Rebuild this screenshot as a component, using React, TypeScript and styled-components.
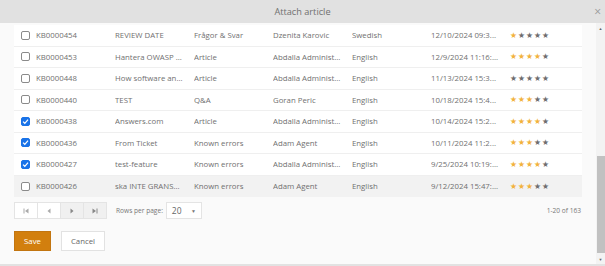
import styled, { createGlobalStyle } from "styled-components";

const GlobalStyle = createGlobalStyle`
  html, body {
    margin: 0;
    padding: 0;
    background: #fafafa;
  }
  body {
    font-family: "Open Sans", "Noto Sans", sans-serif;
  }
`;

type Row = {
  id: string;
  title: string;
  type: string;
  author: string;
  lang: string;
  date: string;
  stars: number;
  checked?: boolean;
  hover?: boolean;
};

const rows: Row[] = [
  { id: "KB0000454", title: "REVIEW DATE", type: "Frågor & Svar", author: "Dzenita Karovic", lang: "Swedish", date: "12/10/2024 09:3...", stars: 1 },
  { id: "KB0000453", title: "Hantera OWASP ...", type: "Article", author: "Abdalla Administ...", lang: "English", date: "12/9/2024 11:16:...", stars: 4 },
  { id: "KB0000448", title: "How software an...", type: "Article", author: "Abdalla Administ...", lang: "English", date: "11/13/2024 15:3...", stars: 0 },
  { id: "KB0000440", title: "TEST", type: "Q&A", author: "Goran Peric", lang: "English", date: "10/18/2024 15:4...", stars: 3 },
  { id: "KB0000438", title: "Answers.com", type: "Article", author: "Abdalla Administ...", lang: "English", date: "10/14/2024 15:2...", stars: 4, checked: true },
  { id: "KB0000436", title: "From Ticket", type: "Known errors", author: "Adam Agent", lang: "English", date: "10/11/2024 11:2...", stars: 3, checked: true },
  { id: "KB0000427", title: "test-feature", type: "Known errors", author: "Abdalla Administ...", lang: "English", date: "9/25/2024 10:19:...", stars: 4, checked: true },
  { id: "KB0000426", title: "ska INTE GRANS...", type: "Known errors", author: "Adam Agent", lang: "English", date: "9/12/2024 15:47:...", stars: 3, hover: true },
];

export default function App() {
  return (
    <>
      <GlobalStyle />
      <Dialog>
        <Header>
          <span />
          <Title>Attach article</Title>
          <Close>×</Close>
        </Header>
        <Body>
          <Main>
            <Table>
              {rows.map((r) => (
                <TableRow key={r.id} $hover={r.hover}>
                  <CheckCell>
                    <Check $checked={r.checked}>
                      {r.checked && (
                        <svg width="7" height="7" viewBox="0 0 10 10">
                          <path d="M1.5 5.2 L4 7.6 L8.6 2.4" stroke="#fff" strokeWidth="1.8" fill="none" />
                        </svg>
                      )}
                    </Check>
                  </CheckCell>
                  <Cell>{r.id}</Cell>
                  <Cell>{r.title}</Cell>
                  <Cell>{r.type}</Cell>
                  <Cell>{r.author}</Cell>
                  <Cell>{r.lang}</Cell>
                  <Cell>{r.date}</Cell>
                  <Cell>
                    <Stars>
                      {[0, 1, 2, 3, 4].map((i) => (
                        <Star key={i} $on={i < r.stars}>★</Star>
                      ))}
                    </Stars>
                  </Cell>
                </TableRow>
              ))}
            </Table>
            <Pager>
              <PagerButtons>
                <PageBtn>
                  <svg width="6" height="6" viewBox="0 0 6 6">
                    <rect x="0.5" y="0.5" width="1" height="5" fill="#aaa" />
                    <path d="M5.5 0.5 L2 3 L5.5 5.5 Z" fill="#aaa" />
                  </svg>
                </PageBtn>
                <PageBtn>
                  <svg width="6" height="6" viewBox="0 0 6 6">
                    <path d="M4.5 0.5 L1.5 3 L4.5 5.5 Z" fill="#aaa" />
                  </svg>
                </PageBtn>
                <PageBtn $active>
                  <svg width="6" height="6" viewBox="0 0 6 6">
                    <path d="M1.5 0.5 L4.5 3 L1.5 5.5 Z" fill="#888" />
                  </svg>
                </PageBtn>
                <PageBtn $active>
                  <svg width="6" height="6" viewBox="0 0 6 6">
                    <path d="M0.5 0.5 L4 3 L0.5 5.5 Z" fill="#888" />
                    <rect x="4.5" y="0.5" width="1" height="5" fill="#888" />
                  </svg>
                </PageBtn>
              </PagerButtons>
              <PagerLabel>Rows per page:</PagerLabel>
              <Select>
                <span>20</span>
                <Arrow>▼</Arrow>
              </Select>
              <Count>1-20 of 163</Count>
            </Pager>
            <Actions>
              <SaveBtn>Save</SaveBtn>
              <CancelBtn>Cancel</CancelBtn>
            </Actions>
          </Main>
          <Scrollbar>
            <ScrollArrow>▲</ScrollArrow>
            <Track>
              <Thumb />
            </Track>
            <ScrollArrow>▼</ScrollArrow>
          </Scrollbar>
        </Body>
      </Dialog>
    </>
  );
}

const Dialog = styled.div`
  width: 605px;
  height: 266px;
  display: flex;
  flex-direction: column;
  background: #fafafa;
  border-bottom: 2px solid #e2e2e2;
  box-sizing: border-box;
  overflow: hidden;
`;

const Header = styled.div`
  height: 23px;
  flex-shrink: 0;
  display: grid;
  grid-template-columns: 1fr auto 1fr;
  align-items: center;
  background: #e1e1e1;
`;

const Title = styled.div`
  font-size: 9.2px;
  color: #707070;
`;

const Close = styled.div`
  justify-self: end;
  margin-right: 4px;
  font-size: 12px;
  color: #999;
  line-height: 1;
`;

const Body = styled.div`
  flex: 1;
  display: flex;
  min-height: 0;
`;

const Main = styled.div`
  flex: 1;
  padding: 2px 14px 0 14px;
  display: flex;
  flex-direction: column;
`;

const Table = styled.div`
  background: #fff;
`;

const TableRow = styled.div<{ $hover?: boolean }>`
  display: grid;
  grid-template-columns: 22px repeat(6, 79px) 1fr;
  align-items: center;
  height: 21.5px;
  box-sizing: border-box;
  border-bottom: 1px solid #efefef;
  background: ${(p) => (p.$hover ? "#f2f2f2" : "#fff")};
  &:last-child {
    border-bottom: none;
  }
`;

const CheckCell = styled.div`
  display: flex;
  padding-left: 7px;
`;

const Check = styled.div<{ $checked?: boolean }>`
  width: 9px;
  height: 9px;
  box-sizing: border-box;
  border-radius: 2px;
  border: 1px solid ${(p) => (p.$checked ? "#1a73e8" : "#8a8a8a")};
  background: ${(p) => (p.$checked ? "#1a73e8" : "#fff")};
  display: flex;
  align-items: center;
  justify-content: center;
`;

const Cell = styled.div`
  font-size: 7.8px;
  color: #707070;
  white-space: nowrap;
  overflow: hidden;
`;

const Stars = styled.div`
  display: flex;
  gap: 1px;
  font-family: "DejaVu Sans", sans-serif;
`;

const Star = styled.span<{ $on?: boolean }>`
  font-size: 7.8px;
  color: ${(p) => (p.$on ? "#f2b33d" : "#6e6e6e")};
`;

const Pager = styled.div`
  display: flex;
  align-items: center;
  margin-top: 5px;
  height: 17px;
`;

const PagerButtons = styled.div`
  display: flex;
  height: 17px;
`;

const PageBtn = styled.div<{ $active?: boolean }>`
  width: 24px;
  height: 17px;
  box-sizing: border-box;
  border: 1px solid #e4e4e4;
  margin-left: -1px;
  background: ${(p) => (p.$active ? "#f0f0f0" : "#fff")};
  display: flex;
  align-items: center;
  justify-content: center;
  &:first-child {
    margin-left: 0;
  }
`;

const PagerLabel = styled.span`
  font-size: 6.6px;
  color: #777;
  margin-left: 9px;
`;

const Select = styled.div`
  margin-left: 3px;
  width: 36px;
  height: 17px;
  box-sizing: border-box;
  border: 1px solid #e4e4e4;
  background: #fff;
  display: flex;
  align-items: center;
  justify-content: space-between;
  padding: 0 5px 0 5px;
  font-size: 8.5px;
  color: #666;
`;

const Arrow = styled.span`
  font-size: 5px;
  color: #777;
`;

const Count = styled.span`
  margin-left: auto;
  font-size: 6.6px;
  color: #777;
  padding-right: 1px;
`;

const Actions = styled.div`
  display: flex;
  gap: 10px;
  margin-top: 12px;
`;

const SaveBtn = styled.div`
  width: 37px;
  height: 20px;
  box-sizing: border-box;
  background: #d27f0e;
  border: 1px solid #c27510;
  color: #fff;
  font-size: 7.8px;
  display: flex;
  align-items: center;
  justify-content: center;
`;

const CancelBtn = styled.div`
  width: 44px;
  height: 20px;
  box-sizing: border-box;
  background: #fff;
  border: 1px solid #e2e2e2;
  color: #666;
  font-size: 7.8px;
  display: flex;
  align-items: center;
  justify-content: center;
`;

const Scrollbar = styled.div`
  width: 9px;
  display: flex;
  flex-direction: column;
  background: #f3f3f3;
  padding-top: 1px;
`;

const ScrollArrow = styled.div`
  height: 9px;
  font-size: 4px;
  color: #666;
  display: flex;
  align-items: center;
  justify-content: center;
`;

const Track = styled.div`
  flex: 1;
  display: flex;
  flex-direction: column;
  justify-content: flex-end;
  padding-bottom: 2px;
`;

const Thumb = styled.div`
  height: 97px;
  margin: 0 0.5px;
  background: #c1c1c1;
`;
